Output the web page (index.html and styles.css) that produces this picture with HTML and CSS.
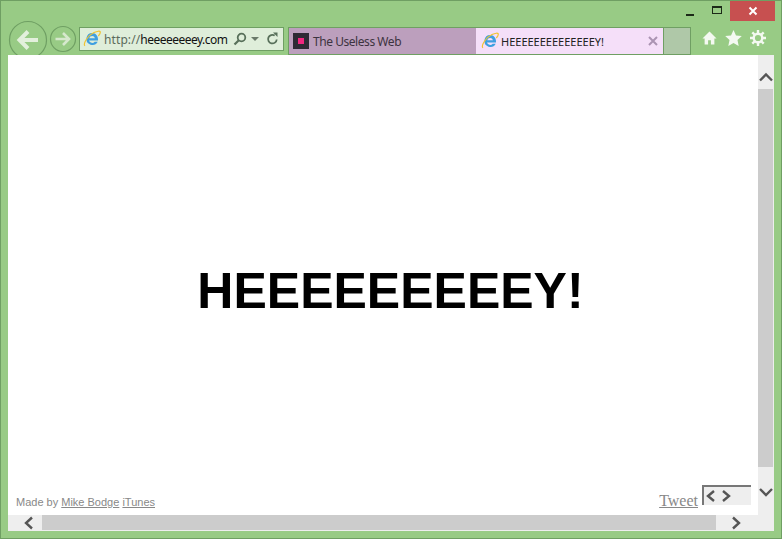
FILE: index.html
```html
<!DOCTYPE html>
<html lang="en">
<head>
  <meta charset="UTF-8">
  <meta name="viewport" content="width=device-width, initial-scale=1.0">
  <title>HEEEEEEEEEY!</title>
  <link rel="stylesheet" href="styles.css">
</head>
<body>

<svg class="defs" width="0" height="0">
  <symbol id="ie" viewBox="0 0 18 18">
    <path d="M9.300 3a6 6 0 1 0 5.400 8.800h-3a3.300 3.300 0 0 1-5.700-1.300h9c.5-4-2.200-7.500-5.700-7.500zM6.200 8.200a3 3 0 0 1 5.800 0z" fill="#3f9fe0"/>
    <path d="M2 15.800C-.5 13.500 5.500 5 11 2.500c3-1.300 6.300-2 6.300-.3 0 1.300-1.300 3-2 3.800" fill="none" stroke="#f0c330" stroke-width="1.200"/>
  </symbol>
</svg>

<div class="window">
  <div class="titlebar">
    <button class="win-btn min"><span class="min-icon"></span></button>
    <button class="win-btn"><span class="max-icon"></span></button>
    <button class="win-btn close">
      <svg width="10" height="10" viewBox="0 0 10 10"><path d="M1.500 1.500l7 7M8.500 1.500l-7 7" stroke="#fff" stroke-width="2"/></svg>
    </button>
  </div>

  <div class="toolbar">
    <div class="nav">
      <svg class="back" width="40" height="40" viewBox="0 0 40 40">
        <circle cx="20" cy="20" r="18.500" fill="none" stroke="#6f9f63" stroke-width="1.200"/>
        <path d="M30 20H12M20 11.500L11.500 20l8.500 8.500" fill="none" stroke="#e3f0dc" stroke-width="4"/>
      </svg>
      <svg class="forward" width="28" height="28" viewBox="0 0 28 28">
        <circle cx="14" cy="14" r="12.500" fill="none" stroke="#6f9f63" stroke-width="1.200"/>
        <path d="M6.500 14h13M14 8l6 6-6 6" fill="none" stroke="#d6e8cd" stroke-width="2.600"/>
      </svg>
    </div>

    <div class="address">
      <svg class="fav" width="18" height="18"><use href="#ie"/></svg>
      <span class="url"><span class="scheme">http://</span><span class="host">heeeeeeeey.com</span></span>
      <svg class="addr-icon" width="14" height="14" viewBox="0 0 14 14">
        <circle cx="8.500" cy="5.500" r="3.800" fill="none" stroke="#58705a" stroke-width="1.800"/>
        <path d="M5.800 8.200L1.500 12.500" stroke="#58705a" stroke-width="2.200"/>
      </svg>
      <span class="caret"></span>
      <svg class="addr-icon refresh" width="13" height="14" viewBox="0 0 13 14">
        <path d="M10.700 7.500a4.300 4.300 0 1 1-2-4" fill="none" stroke="#58705a" stroke-width="1.800"/>
        <path d="M7 .5l4.500 0v4.500z" fill="#58705a"/>
      </svg>
    </div>

    <div class="tabs">
      <div class="tab">
        <span class="favicon"><span class="favicon-dot"></span></span>
        <span class="tab-name">The Useless Web</span>
      </div>
      <div class="tab active">
        <svg class="fav" width="18" height="18"><use href="#ie"/></svg>
        <span class="tab-title">HEEEEEEEEEEEEEEY!</span>
        <svg class="tab-close" width="10" height="10" viewBox="0 0 10 10"><path d="M1 1l8 8M9 1l-8 8" stroke="#ab93b3" stroke-width="2"/></svg>
      </div>
      <div class="new-tab"></div>
    </div>

    <div class="tools">
      <svg width="15" height="16" viewBox="0 0 16 16">
        <path d="M8 1L.5 8.500h2.300V15h3.700v-4.500h3V15h3.700V8.500h2.300z" fill="#f4f9f1"/>
      </svg>
      <svg width="17" height="16" viewBox="0 0 17 16">
        <path d="M8.500 0l2.500 5.400 5.800.7-4.300 4 1.200 5.900-5.200-3-5.200 3 1.200-5.900L.2 6.100l5.800-.7z" fill="#f4f9f1"/>
      </svg>
      <svg width="16" height="16" viewBox="0 0 16 16">
        <circle cx="8" cy="8" r="4.300" fill="none" stroke="#f4f9f1" stroke-width="2.400"/>
        <path d="M8 0v3M8 13v3M0 8h3M13 8h3M2.300 2.300l2.200 2.200M11.500 11.500l2.200 2.200M13.700 2.300l-2.200 2.200M4.500 11.500l-2.200 2.200" stroke="#f4f9f1" stroke-width="2.400"/>
      </svg>
    </div>
  </div>

  <div class="viewport">
    <div class="page-row">
      <main class="page">
        <h1>HEEEEEEEEEY!</h1>
        <footer class="page-foot">
          <p class="credits">Made by <a href="#">Mike Bodge</a> <a href="#">iTunes</a></p>
          <div class="share">
            <a href="#" class="tweet">Tweet</a>
            <div class="counter">
              <svg width="28" height="12" viewBox="0 0 28 12"><path d="M10 1L4 6l6 5M19 1l6 5-6 5" fill="none" stroke="#555" stroke-width="2.400"/></svg>
            </div>
          </div>
        </footer>
      </main>
      <div class="vscroll">
        <svg class="arrow" width="16" height="34" viewBox="0 0 16 34"><path d="M2 25.500L8 19.500l6 6" fill="none" stroke="#555" stroke-width="2.400"/></svg>
        <div class="vthumb"></div>
        <svg class="arrow" width="16" height="48" viewBox="0 0 16 48"><path d="M2 22L8 28l6-6" fill="none" stroke="#555" stroke-width="2.400"/></svg>
      </div>
    </div>
    <div class="hscroll">
      <svg class="arrow" width="34" height="16" viewBox="0 0 34 16"><path d="M24 2.500l-6 5.500 6 5.500" fill="none" stroke="#555" stroke-width="2.400"/></svg>
      <div class="hthumb"></div>
      <svg class="arrow" width="58" height="16" viewBox="0 0 58 16"><path d="M17 2.500l6 5.500-6 5.500" fill="none" stroke="#555" stroke-width="2.400"/></svg>
    </div>
  </div>
</div>

</body>
</html>
```

FILE: styles.css
```css
body {
  margin: 0;
  font-family: "Noto Sans", sans-serif;
  background: #98cb85;
  overflow: hidden;
}
a {
  color: inherit;
}
.defs {
  display: block;
  height: 0;
}
.window {
  box-sizing: border-box;
  width: 782px;
  height: 539px;
  border: 1px solid #6f9f63;
  background: #98cb85;
  display: flex;
  flex-direction: column;
  overflow: hidden;
}
.titlebar {
  display: flex;
  justify-content: flex-end;
  height: 20px;
  padding-right: 6px;
  flex: none;
}
.win-btn {
  border: 0;
  padding: 0;
  background: none;
  width: 26px;
  height: 20px;
  display: flex;
  align-items: center;
  justify-content: center;
}
.win-btn.min {
  margin-right: 1px;
}
.win-btn.close {
  width: 45px;
  background: #c75050;
}
.min-icon {
  width: 8px;
  height: 2px;
  background: #1c2a18;
  margin-top: 7px;
}
.max-icon {
  box-sizing: border-box;
  width: 10px;
  height: 8px;
  border: 1px solid #1c2a18;
  border-top-width: 2px;
  margin-top: -2px;
}

.toolbar {
  display: flex;
  align-items: flex-start;
  height: 34px;
  flex: none;
  padding-left: 8px;
}
.nav {
  display: flex;
  align-items: center;
  height: 34px;
  width: 70px;
  flex: none;
}
.back {
  flex: none;
  margin-top: 3px;
  margin-left: -1px;
}
.forward {
  margin-left: 1px;
  margin-top: 1px;
  flex: none;
}
.address {
  box-sizing: border-box;
  width: 205px;
  height: 24px;
  margin-top: 6px;
  border: 1px solid #6f9f63;
  background: #dfeeda;
  display: flex;
  align-items: center;
  padding-left: 3px;
  flex: none;
  font-size: 12px;
  color: #111;
}
.fav {
  flex: none;
}
.url {
  margin-left: 3px;
  width: 126px;
  white-space: nowrap;
  letter-spacing: .1px;
}
.scheme {
  color: #5b6b5b;
}
.host {
  letter-spacing: -.52px;
}
.addr-icon {
  flex: none;
  margin-left: 3px;
}
.addr-icon.refresh {
  margin-left: 1px;
}
.caret {
  width: 0;
  height: 0;
  border: 4px solid transparent;
  border-top-color: #6a7a6a;
  border-bottom: 0;
  margin: 0 6px 0 4px;
}
.tabs {
  display: flex;
  height: 28px;
  margin-top: 6px;
  margin-left: 4px;
  border: 1px solid #6f9f63;
  box-sizing: border-box;
  flex: none;
}
.tab {
  box-sizing: border-box;
  width: 187px;
  display: flex;
  align-items: center;
  padding-left: 4px;
  gap: 4px;
  background: #bc9fbd;
  font-size: 12px;
  color: #3c3340;
  white-space: nowrap;
}
.tab-name {
  letter-spacing: -.45px;
}
.tab.active {
  width: 188px;
  background: #f5dff9;
  color: #222;
  padding-left: 5px;
  gap: 2px;
  border-right: 1px solid #6f9f63;
}
.tab-title {
  font-size: 11px;
  width: 145px;
  overflow: hidden;
}
.tab-close {
  flex: none;
}
.favicon {
  width: 16px;
  height: 16px;
  background: #2f2a35;
  display: flex;
  align-items: center;
  justify-content: center;
  flex: none;
}
.favicon-dot {
  width: 6px;
  height: 6px;
  background: #f0277f;
}
.new-tab {
  width: 26px;
  background: #afc8a8;
}
.tools {
  display: flex;
  align-items: center;
  gap: 8px;
  height: 24px;
  margin-top: 5px;
  margin-left: 11px;
}

.viewport {
  margin: 0 7px;
  background: #eee;
  display: flex;
  flex-direction: column;
  height: 476px;
  flex: none;
}
.page-row {
  display: flex;
  height: 460px;
  flex: none;
}
.page {
  width: 750px;
  flex: none;
  background: #fff;
  display: flex;
  flex-direction: column;
}
h1 {
  margin: 0;
  flex: 1;
  display: flex;
  align-items: center;
  justify-content: center;
  padding: 48px 0 0 15px;
  font: bold 50px "Liberation Sans", Arial, sans-serif;
  color: #000;
}
.page-foot {
  display: flex;
  justify-content: space-between;
  align-items: flex-end;
  height: 32px;
  padding: 0 7px 5px 8px;
}
.credits {
  margin: 0 0 2px;
  font: 11px "Liberation Sans", Arial, sans-serif;
  color: #888;
}
.share {
  display: flex;
  align-items: flex-end;
  gap: 4px;
}
.tweet {
  font: 16px "Liberation Serif", "Times New Roman", serif;
  color: #888;
  margin-left: -1px;
}
.counter {
  box-sizing: border-box;
  width: 49px;
  height: 20px;
  background: #eee;
  border-top: 2px solid #777;
  border-left: 2px solid #777;
  margin-bottom: 5px;
  display: flex;
  align-items: center;
}
.vscroll {
  width: 16px;
  display: flex;
  flex-direction: column;
  flex: none;
}
.vthumb {
  flex: 1;
  width: 15px;
  background: #ccc;
}
.arrow {
  flex: none;
  display: block;
}
.hscroll {
  display: flex;
  height: 16px;
  flex: none;
}
.hthumb {
  flex: 1;
  height: 15px;
  background: #ccc;
}
```
